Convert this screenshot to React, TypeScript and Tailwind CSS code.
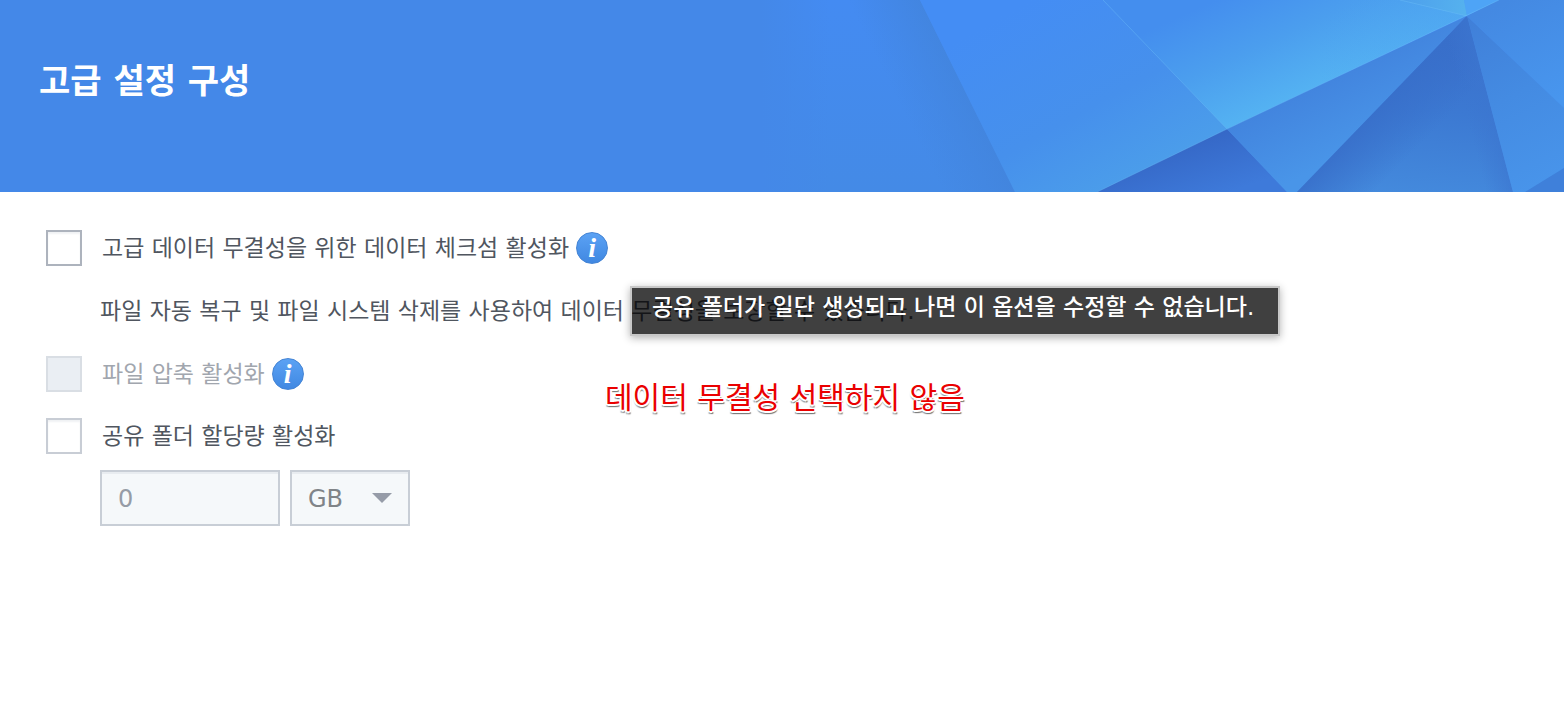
import type { ReactNode } from "react";

// Faceted artwork on the right side of the header.
function HeaderArt() {
  return (
    <svg
      className="absolute inset-y-0 right-0 h-full w-[804px]"
      viewBox="0 0 804 192"
      preserveAspectRatio="xMaxYMin slice"
      aria-hidden="true"
    >
      <defs>
        <linearGradient id="base" x1="0" y1="0" x2="0" y2="1">
          <stop offset="0" stopColor="#448bf2" />
          <stop offset="1" stopColor="#448ae6" />
        </linearGradient>
        <linearGradient id="fade" x1="0" y1="0" x2="1" y2="0">
          <stop offset="0" stopColor="#4488e8" />
          <stop offset="1" stopColor="#4488e8" stopOpacity="0" />
        </linearGradient>
        <linearGradient id="crease" gradientUnits="userSpaceOnUse" x1="150" y1="125" x2="208" y2="96">
          <stop offset="0" stopColor="#4284dc" stopOpacity="0" />
          <stop offset="1" stopColor="#4284dc" stopOpacity="0.8" />
        </linearGradient>
        <linearGradient id="slab" gradientUnits="userSpaceOnUse" x1="270" y1="0" x2="370" y2="180">
          <stop offset="0" stopColor="#448df4" />
          <stop offset="0.6" stopColor="#4690ec" />
          <stop offset="1" stopColor="#4b9dea" />
        </linearGradient>
        <linearGradient id="light" gradientUnits="userSpaceOnUse" x1="500" y1="-20" x2="550" y2="90">
          <stop offset="0" stopColor="#448eee" />
          <stop offset="0.5" stopColor="#4b9eee" />
          <stop offset="1" stopColor="#54b2f2" />
        </linearGradient>
        <linearGradient id="lightRight" gradientUnits="userSpaceOnUse" x1="560" y1="0" x2="707" y2="0">
          <stop offset="0" stopColor="#4a9cf0" stopOpacity="0" />
          <stop offset="1" stopColor="#4a9cf0" stopOpacity="0.9" />
        </linearGradient>
        <linearGradient id="deep" gradientUnits="userSpaceOnUse" x1="410" y1="145" x2="430" y2="205">
          <stop offset="0" stopColor="#3567c6" />
          <stop offset="1" stopColor="#3e7ada" />
        </linearGradient>
        <linearGradient id="mid" gradientUnits="userSpaceOnUse" x1="530" y1="95" x2="565" y2="165">
          <stop offset="0" stopColor="#4284de" />
          <stop offset="1" stopColor="#4995e8" />
        </linearGradient>
        <linearGradient id="cone" gradientUnits="userSpaceOnUse" x1="707" y1="16" x2="690" y2="210">
          <stop offset="0" stopColor="#396cc8" />
          <stop offset="0.5" stopColor="#3c79d2" />
          <stop offset="1" stopColor="#458cde" />
        </linearGradient>
        <linearGradient id="coneLeft" gradientUnits="userSpaceOnUse" x1="610" y1="116" x2="650" y2="155">
          <stop offset="0" stopColor="#386fca" stopOpacity="0.9" />
          <stop offset="1" stopColor="#386fca" stopOpacity="0" />
        </linearGradient>
        <linearGradient id="coneRight" gradientUnits="userSpaceOnUse" x1="708" y1="122" x2="735" y2="115">
          <stop offset="0" stopColor="#3c76d0" stopOpacity="0" />
          <stop offset="1" stopColor="#3c76d0" stopOpacity="0.7" />
        </linearGradient>
        <linearGradient id="east" gradientUnits="userSpaceOnUse" x1="707" y1="16" x2="790" y2="180">
          <stop offset="0" stopColor="#407fd8" />
          <stop offset="0.5" stopColor="#448be2" />
          <stop offset="1" stopColor="#4894ea" />
        </linearGradient>
        <linearGradient id="northEast" gradientUnits="userSpaceOnUse" x1="750" y1="0" x2="800" y2="100">
          <stop offset="0" stopColor="#4489e2" />
          <stop offset="1" stopColor="#4896ee" />
        </linearGradient>
        <linearGradient id="tip" gradientUnits="userSpaceOnUse" x1="640" y1="0" x2="704" y2="8">
          <stop offset="0" stopColor="#4d9fec" />
          <stop offset="1" stopColor="#55b1ee" />
        </linearGradient>
      </defs>
      <rect width="804" height="192" fill="url(#base)" />
      <rect width="70" height="192" fill="url(#fade)" />
      <path d="M60 0H160L255 192H155Z" fill="url(#crease)" />
      <path d="M160 0H343L467 129L337 192H255Z" fill="url(#slab)" />
      <path d="M343 0H739L467 129Z" fill="url(#light)" />
      <path d="M500 0H739L467 129Z" fill="url(#lightRight)" opacity="0.5" />
      <path d="M640 0H704L707 16Z" fill="url(#tip)" />
      <path d="M704 0H739L707 16Z" fill="#4ea4f6" />
      <path d="M337 192L467 129L527 192Z" fill="url(#deep)" />
      <path d="M467 129L707 16L537 192H527Z" fill="url(#mid)" />
      <path d="M707 16L537 192H753Z" fill="url(#cone)" />
      <path d="M707 16L537 192H753Z" fill="url(#coneLeft)" />
      <path d="M707 16L537 192H753Z" fill="url(#coneRight)" />
      <path d="M707 16L804 108V192H753Z" fill="url(#east)" />
      <path d="M707 16L739 0H804V108Z" fill="url(#northEast)" />
      <path d="M765 192L804 168V192Z" fill="#3f80da" />
      <g fill="none" stroke="#6fc0f8" strokeOpacity="0.4">
        <path d="M343 0L467 129" />
        <path d="M337 192L467 129L739 0" />
        <path d="M640 0L707 16" />
      </g>
    </svg>
  );
}

function InfoButton({ label, children }: { label: string; children?: ReactNode }) {
  return (
    <span className="relative flex">
      <button
        type="button"
        aria-label={label}
        className="flex h-8 w-8 items-center justify-center rounded-full border border-[#4484d4] bg-linear-to-b from-[#5ba2f4] to-[#4088e2] font-['Liberation_Serif',serif] text-[28px] leading-7 font-bold text-white italic"
      >
        i
      </button>
      {children}
    </span>
  );
}

function CheckRow({
  id,
  label,
  boxClass,
  disabled = false,
  children,
}: {
  id: string;
  label: string;
  boxClass: string;
  disabled?: boolean;
  children?: ReactNode;
}) {
  return (
    <div className="flex h-9 items-center">
      <input
        id={id}
        type="checkbox"
        disabled={disabled}
        className={`h-9 w-9 shrink-0 appearance-none border-2 ${boxClass}`}
      />
      <label
        htmlFor={id}
        className={`pr-[7px] pl-5 whitespace-nowrap ${disabled ? "text-[#a1a6ae]" : "text-[#50565f]"}`}
      >
        {label}
      </label>
      {children}
    </div>
  );
}

export default function App() {
  return (
    <div className="min-h-screen bg-white font-['DejaVu_Sans','Noto_Sans_CJK_KR',sans-serif] text-[23px] leading-[38px] text-[#50565f]">
      <header className="relative h-48 overflow-hidden bg-[#4488e8]">
        <HeaderArt />
        <h1 className="relative px-[39px] pt-14 text-[34px] leading-[50px] font-bold text-white">
          고급 설정 구성
        </h1>
      </header>

      <main className="relative px-[46px] pt-[38px]">
        <CheckRow
          id="checksum"
          label="고급 데이터 무결성을 위한 데이터 체크섬 활성화"
          boxClass="border-[#adb3bd] bg-white shadow-[inset_0_2px_2px_#f0f2f4]"
        >
          <InfoButton label="데이터 체크섬 정보">
            <span
              role="tooltip"
              className="absolute top-[54px] left-[54px] h-[50px] w-[650px] border-2 border-[#c8c8c8] bg-black/75 bg-clip-padding px-5 font-medium whitespace-nowrap text-white shadow-[0_2px_8px_rgba(0,0,0,0.3)]"
            >
              공유 폴더가 일단 생성되고 나면 이 옵션을 수정할 수 없습니다.
            </span>
          </InfoButton>
        </CheckRow>

        <p className="mt-[26px] pl-[54px] whitespace-nowrap">
          파일 자동 복구 및 파일 시스템 삭제를 사용하여 데이터 무결성을 보장할 수 있습니다.
        </p>

        <div className="mt-[26px]">
          <CheckRow
            id="compression"
            label="파일 압축 활성화"
            boxClass="border-[#d9dee4] bg-[#eaeef3]"
            disabled
          >
            <InfoButton label="파일 압축 정보" />
          </CheckRow>
        </div>

        {/* Red note laid over the form */}
        <p className="absolute top-[187px] left-[605px] text-[30px] whitespace-nowrap text-[#ea0000] [text-shadow:1px_0_0_#fff,-1px_0_0_#fff,0_1px_0_#fff,0_-1px_0_#fff,2px_1px_0_#fff,-2px_1px_0_#fff,0_2px_0_#fff,1px_3px_1px_#777,-1px_3px_1px_#aaa]">
          데이터 무결성 선택하지 않음
        </p>

        <div className="mt-[26px]">
          <CheckRow
            id="quota"
            label="공유 폴더 할당량 활성화"
            boxClass="border-[#c8cdd5] bg-white shadow-[inset_0_2px_2px_#f0f2f4]"
          />
        </div>

        <div className="mt-4 flex gap-[10px] pl-[54px] text-2xl">
          <input
            type="text"
            aria-label="할당량"
            defaultValue="0"
            disabled
            className="h-14 w-[180px] border-2 border-[#c8ced6] bg-[#f5f8fa] px-4 pt-[2px] text-[#969ca6] shadow-[inset_0_2px_0_#e8ecf0]"
          />
          <div className="grid w-[120px] items-center">
            <select
              aria-label="단위"
              disabled
              className="col-start-1 row-start-1 h-14 appearance-none border-2 border-[#c8ced6] bg-[#f5f8fa] px-4 pt-[2px] text-[#808488] opacity-100 shadow-[inset_0_2px_0_#e8ecf0]"
            >
              <option>GB</option>
            </select>
            <svg
              className="pointer-events-none col-start-1 row-start-1 mr-[18px] h-[10px] w-5 justify-self-end"
              viewBox="0 0 20 10"
              aria-hidden="true"
            >
              <path d="M0 0H20L10 10Z" fill="#969ca8" />
            </svg>
          </div>
        </div>
      </main>
    </div>
  );
}
